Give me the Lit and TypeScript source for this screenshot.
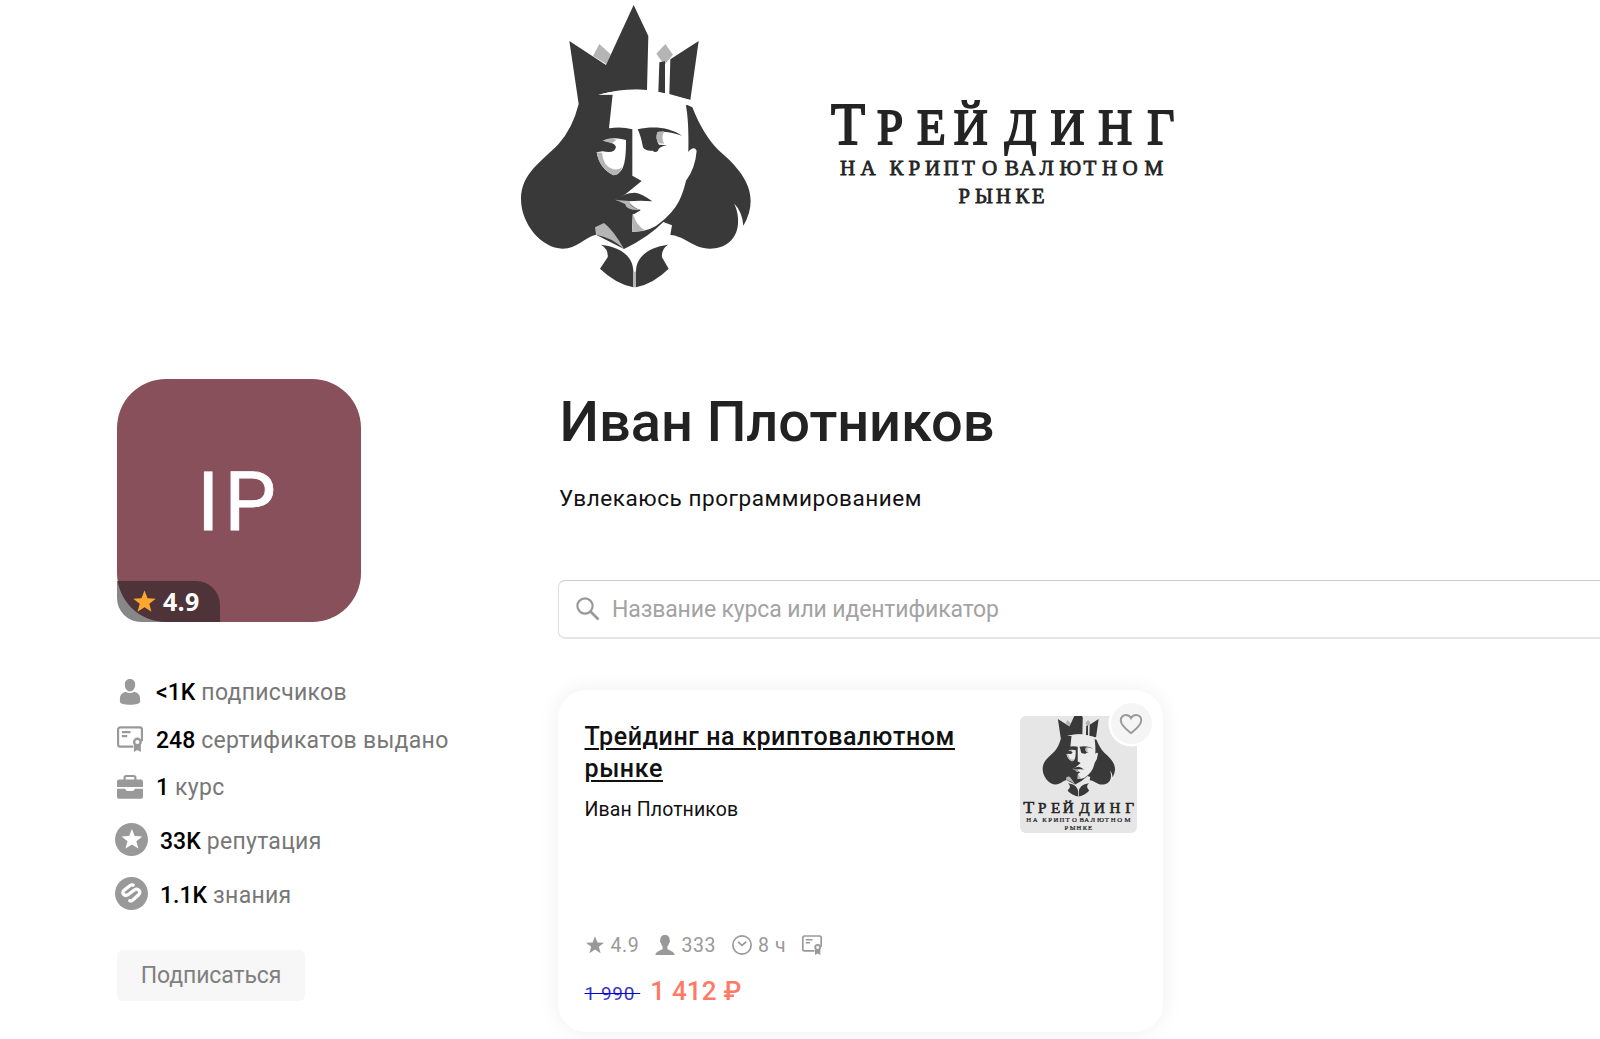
import { LitElement, html, css, svg, nothing } from "lit";
import { customElement, property } from "lit/decorators.js";

/* Portrait artwork on a 750 x 900 grid. */
const king = (face: string) => svg`
  <path fill="#b5b5b5" d="M268 132L302 163L290 193L249 168ZM466 132L489 164L463 195L439 161Z"/>
  <path fill="#393939" d="M178 123L288 195L371 15L415 108L411 270Q340 266 265 284L308 283L527 313L547 322C570 380 595 420 625 450C680 497 722 545 722 602Q722 640 700 677Q697 635 673 611Q686 640 684 672C680 720 645 746 600 746C550 746 525 708 481 705L486 676L460 666Q415 712 342 747L258 704C225 712 200 746 158 746C95 746 33 672 33 598C33 520 95 485 145 433Q188 385 206 312Z"/>
  <path fill="#393939" d="M448 187L465 184V280L445 276ZM481 178L566 123L541 300L478 282Z"/>
  <path fill=${face} d="M308 283L420 280L527 313Q537 360 535 456Q551 436 560 452Q556 505 528 542C514 600 498 628 456 664Q420 698 366 695L368 643L392 630Q350 633 340 605L316 600L347 582L395 543L367 527V388Q335 379 297 385Z"/>
  <path fill=${face} d="M265 284Q340 264 411 270L445 276L541 300L530 316L420 298L308 284Z"/>
  <path fill=${face} d="M278 422Q310 409 348 420Q349 480 338 505Q326 526 310 526Q268 505 260 457L278 454Q315 462 318 440Q312 426 278 422Z"/>
  <path fill="#b5b5b5" d="M278 422Q300 412 320 419L306 430ZM260 457L276 458Q280 500 310 508Q328 510 338 500Q326 526 310 526Q268 505 260 457Z"/>
  <path fill="#393939" d="M383 388C430 377 480 382 516 407C485 396 460 393 443 396Q435 415 447 434L472 436Q446 440 444 452Q436 460 428 452Q406 454 399 442Q392 405 383 388Z"/>
  <path fill="#b5b5b5" d="M443 396L463 394Q452 412 462 431L447 430Q433 415 443 396Z"/>
  <path fill="#393939" d="M316 600Q340 579 375 578Q395 580 427 604Q390 600 355 604Q370 625 392 630L372 643Q343 625 336 607Z"/>
  <path fill="#b5b5b5" d="M318 600L358 603Q360 622 390 630Q350 632 345 612ZM370 643Q380 680 405 690Q385 696 366 695Z"/>
  <path fill="#b5b5b5" d="M255 682L282 669Q310 690 342 747Q305 712 258 704Z"/>
  <path fill="#393939" d="M273 734C335 742 368 770 370 812V862Q315 850 270 806L293 772Q296 748 273 734ZM474 734C415 742 380 770 378 812V862Q432 850 476 806L456 772Q453 748 474 734Z"/>
  <path fill="#b5b5b5" d="M370 815H378V862H370Z"/>`;

/* Wordmark: every letter is placed on its own, which gives the wide tracking. */
const wordmark = () => svg`
  <g fill="#242424" stroke="#242424" font-family="Liberation Serif, serif">
    <text transform="scale(.93 1)" y="144" font-size="50.500" stroke-width="1.900" x="893.500 943 986 1025.500 1080 1129.500 1181 1233.500"><tspan font-size="60">Т</tspan>РЕЙДИНГ</text>
    <text y="175" font-size="21" stroke-width=".8" x="840 860.500 889.500 908.500 925 943.500 962 982 1005 1020 1039.500 1059.500 1083.500 1102 1122.500 1144.500"
      >НАКРИПТОВАЛЮТНОМ</text>
    <text y="203" font-size="20.500" stroke-width=".8" x="958.500 975 996 1015.500 1032">РЫНКЕ</text>
  </g>`;

const star = "M12 1.500l2.900 7.400 7.900.4-6.200 4.900 2.100 7.700L12 17.500l-6.700 4.400 2.100-7.700L1.200 9.300l7.900-.4z";

const icons: Record<string, unknown> = {
  star: svg`<path fill="currentColor" d=${star}/>`,
  user: svg`<path fill="currentColor" d="M12 0c3.200 0 5 2.300 4.800 5.400C16.600 9 14.700 11.500 12 11.500S7.400 9 7.200 5.400C7 2.300 8.800 0 12 0zM8 11.700c2.500 1.700 5.500 1.700 8 0 3.500.8 5.300 3 5.300 6.300v3.200c0 1.200-4 2.600-9.300 2.600s-9.300-1.400-9.300-2.600V18c0-3.300 1.800-5.500 5.300-6.300z"/>`,
  cert: svg`<g fill="none" stroke="currentColor" stroke-width="2"><path d="M15 19H3a2 2 0 0 1-2-2V3.200a2 2 0 0 1 2-2h18a2 2 0 0 1 2 2V14"/><path d="M4.500 5.700h8M4.500 9.300h5"/><circle cx="18.800" cy="14.800" r="3" stroke-width="2.200"/></g><path fill="currentColor" d="M15.600 17.500h6.400V24l-3.200-1.800L15.600 24z"/>`,
  bag: svg`<path fill="currentColor" d="M6 5V3.500A2.500 2.500 0 0 1 8.500 1h7A2.500 2.500 0 0 1 18 3.500V5h4a2 2 0 0 1 2 2v5H0V7a2 2 0 0 1 2-2zm2 0h8V3.700a.9.900 0 0 0-.9-.9H8.900a.9.900 0 0 0-.9.900zM0 13.600h7.500q.5 2.200 2.500 2.200h4q2 0 2.500-2.200H24V21a1.800 1.800 0 0 1-1.800 1.800H1.800A1.800 1.800 0 0 1 0 21z"/>`,
  rep: svg`<circle cx="12" cy="12" r="12" fill="currentColor"/><path fill="#fff" transform="translate(3.900 3.300) scale(.7)" d=${star}/>`,
  know: svg`<circle cx="12" cy="12" r="12" fill="currentColor"/><path fill="none" stroke="#fff" stroke-width="2.400" stroke-linecap="round" stroke-linejoin="round" d="M13.200 5.900Q12 5.400 11 6.200L6.500 9.700Q5 11.200 6.300 12.700Q7.600 14.100 9.400 12.900L14.300 9.300Q16 8.200 17.500 9.700Q18.700 11.300 17.200 12.900L13 16.700Q11.900 17.700 10.700 17.300"/>`,
  search: svg`<g fill="none" stroke="currentColor" stroke-width="2.200"><circle cx="9" cy="9" r="7.600"/><path stroke-width="2.700" d="M14.500 14.500l8 8"/></g>`,
  heart: svg`<path fill="none" stroke="currentColor" stroke-width="2" d="M12 21C7 16.800 1.300 12.600 1.300 7.700 1.300 4.400 3.700 2 6.800 2 9 2 11 3.200 12 5.200 13 3.200 15 2 17.200 2c3.100 0 5.500 2.400 5.500 5.700C22.700 12.600 17 16.800 12 21z"/>`,
  bust: svg`<path fill="currentColor" d="M12 0c3.800 0 5.800 2.500 5.600 6 .8.600.3 3-.7 3.600-.5 2-1.300 3.200-2 4v3.200c1.600 2 8.600 2.500 8.600 7.200H.5c0-4.700 7-5.200 8.600-7.200v-3.200c-.7-.8-1.500-2-2-4-1-.6-1.500-3-.7-3.600C6.200 2.500 8.200 0 12 0z"/>`,
  clock: svg`<g fill="none" stroke="currentColor" stroke-width="2"><circle cx="12" cy="12" r="11"/><path d="M7.300 8.300l4.700 4.200 5-4.400"/></g>`,
};

@customElement("ui-icon")
class UiIcon extends LitElement {
  @property() name = "";
  static styles = css`
    :host { display: block; flex: none; }
    .glyph { display: block; width: 100%; height: 100%; overflow: visible; }
  `;
  render() {
    return html`<svg class="glyph" viewBox="0 0 24 24">${icons[this.name] ?? nothing}</svg>`;
  }
}

const stats = [
  { icon: "user", value: "<1K", label: "подписчиков", kind: "" },
  { icon: "cert", value: "248", label: "сертификатов выдано", kind: "" },
  { icon: "bag", value: "1", label: "курс", kind: "" },
  { icon: "rep", value: "33K", label: "репутация", kind: "round" },
  { icon: "know", value: "1.1K", label: "знания", kind: "round" },
];

@customElement("app-root")
class AppRoot extends LitElement {
  static styles = css`
    :host {
      display: block; width: 100%; height: 1039px; overflow: hidden; background: #fff;
      font-family: Roboto, "Liberation Sans", sans-serif; color: #111;
    }
    * { box-sizing: border-box; }
    .banner { display: block; width: 1600px; height: 379px; }
    .content { display: grid; grid-template-columns: 441px 1100px; padding-left: 117px; }

    .avatar { position: relative; width: 244px; height: 243px; }
    .tile {
      width: 100%; height: 100%; border-radius: 49px; background: #87505a; color: #fff;
      display: flex; align-items: center; justify-content: center;
      font-size: 82px; line-height: 1; letter-spacing: 5px; padding-top: 2px;
      -webkit-text-stroke: .8px #fff;
    }
    .badge {
      position: absolute; left: 0; bottom: 0; width: 103px; height: 41px; padding-left: 15px;
      display: flex; align-items: center; gap: 6px; border-radius: 0 24px 0 24px;
      background: rgba(28, 28, 28, .53); color: #fff; font: 700 25px/41px "Open Sans", sans-serif; letter-spacing: .3px;
    }
    .badge ui-icon { width: 25px; height: 25px; color: #ffa62e; }

    .stats { margin: 46px 0 0; padding: 0; list-style: none; }
    .stat { display: flex; align-items: center; height: 47.500px; gap: 13px; font-size: 23px; letter-spacing: .3px; color: #777; white-space: nowrap; }
    .stat ui-icon { width: 26px; height: 26px; color: #999; }
    .stat.round { height: 54px; gap: 12px; margin-left: -2px; }
    .stat:not(.round) + .round { margin-top: 2px; }
    .stat.round ui-icon { width: 33px; height: 33px; }
    .caption { padding-top: 2px; }
    .round .caption { padding-top: 3px; }
    .value { color: #000; font-weight: 500; letter-spacing: 0; }
    .subscribe {
      display: block; width: 188px; height: 51px; margin-top: 29px; border: 0; border-radius: 6px;
      background: #f7f7f7; color: #808080; font: 400 23px/51px Roboto, sans-serif; letter-spacing: -.1px; padding: 0; text-align: center;
    }

    .name { margin: 8px 0 0 1.500px; font-size: 56px; line-height: 70px; font-weight: 500; color: #222; letter-spacing: -.05px; }
    .about { margin: 27px 0 0 1px; font-size: 22.500px; line-height: 28px; letter-spacing: .55px; }
    .search {
      display: flex; align-items: center; gap: 12px; height: 59px; margin-top: 68px; padding-left: 17px;
      border: 1px solid #ddd; border-top-color: #ccc; border-bottom: 2px solid #e5e5e5; border-radius: 7px;
      color: #a3a3a3; font-size: 23px; letter-spacing: -.13px;
    }
    .search ui-icon { width: 24px; height: 24px; color: #999; }

    .card {
      display: flex; flex-direction: column; width: 605px; height: 342px; margin-top: 51px; padding: 26px 26px 0 26.500px;
      border-radius: 28px; box-shadow: 0 0 22px rgba(0, 0, 0, .065);
    }
    .top { display: flex; justify-content: space-between; height: 217px; }
    .title { margin: 4.500px 0 0; width: 400px; font-size: 25px; line-height: 32.500px; font-weight: 500; letter-spacing: .6px; text-decoration: underline; text-decoration-thickness: 1.500px; text-underline-offset: 3px; }
    .author { margin-top: 12px; font-size: 19.500px; line-height: 24px; letter-spacing: .1px; }
    .cover { position: relative; width: 117px; height: 117px; }
    .art { display: block; width: 117px; height: 117px; border-radius: 6px; background: #e6e6e6; }
    .like {
      position: absolute; left: 90.500px; top: -13px; width: 41px; height: 41px; border-radius: 50%;
      display: grid; place-items: center; background: #f5f5f5; box-shadow: 0 0 0 2.500px #fff; color: #999;
    }
    .like ui-icon { width: 24px; height: 24px; padding-top: 1px; box-sizing: border-box; }
    .meta { display: flex; align-items: center; height: 24px; gap: 16px; color: #999; font-size: 19.500px; letter-spacing: .6px; }
    .item { display: flex; align-items: center; gap: 6px; }
    .item ui-icon { width: 20px; height: 20px; }
    .prices { display: flex; align-items: baseline; gap: 10px; margin-top: 17px; line-height: 34px; white-space: pre; }
    .old { color: #33c; font-size: 19px; letter-spacing: .6px; text-decoration: line-through; text-decoration-color: #00d; }
    .new { color: #ff7a66; font-size: 26px; font-weight: 500; letter-spacing: .2px; }
  `;

  render() {
    return html`
      <svg class="banner" viewBox="0 0 1600 379">
        <g transform="translate(510 0) scale(.33333)">${king("#fff")}</g>
        ${wordmark()}
      </svg>
      <main class="content">
        <aside>
          <div class="avatar">
            <div class="tile">IP</div>
            <div class="badge"><ui-icon name="star"></ui-icon>4.9</div>
          </div>
          <ul class="stats">
            ${stats.map((s) => html`<li class="stat ${s.kind}"><ui-icon name=${s.icon}></ui-icon><span class="caption"><span class="value">${s.value}</span> ${s.label}</span></li>`)}
          </ul>
          <button class="subscribe">Подписаться</button>
        </aside>
        <section>
          <h1 class="name">Иван Плотников</h1>
          <p class="about">Увлекаюсь программированием</p>
          <div class="search"><ui-icon name="search"></ui-icon><span>Название курса или идентификатор</span></div>
          <article class="card">
            <div class="top">
              <div>
                <h2 class="title">Трейдинг на криптовалютном рынке</h2>
                <div class="author">Иван Плотников</div>
              </div>
              <div class="cover">
                <svg class="art" viewBox="0 0 117 117">
                  <g transform="translate(19.200 -9.900) scale(.105)">${king("#ebebeb")}</g>
                  <g transform="translate(-264.800 54.800) scale(.3226 .29)">${wordmark()}</g>
                </svg>
                <div class="like"><ui-icon name="heart"></ui-icon></div>
              </div>
            </div>
            <div class="meta">
              <span class="item"><ui-icon name="star"></ui-icon>4.9</span>
              <span class="item"><ui-icon name="bust"></ui-icon>333</span>
              <span class="item"><ui-icon name="clock"></ui-icon>8 ч</span>
              <span class="item"><ui-icon name="cert"></ui-icon></span>
            </div>
            <div class="prices"><span class="old">1 990 </span><span class="new">1 412 ₽</span></div>
          </article>
        </section>
      </main>
    `;
  }
}
